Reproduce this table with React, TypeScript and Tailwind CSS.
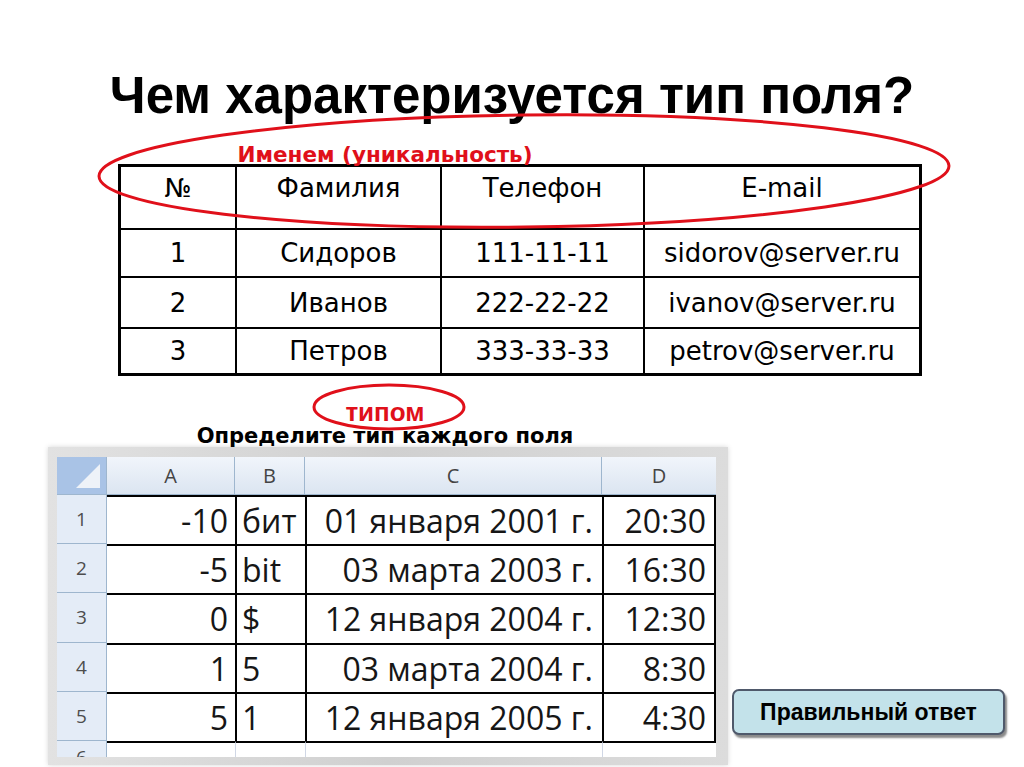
export default function App() {
  const people = [
    { n: "1", name: "Сидоров", phone: "111-11-11", mail: "sidorov@server.ru", h: "h-[48px]" },
    { n: "2", name: "Иванов", phone: "222-22-22", mail: "ivanov@server.ru", h: "h-[51px]" },
    { n: "3", name: "Петров", phone: "333-33-33", mail: "petrov@server.ru", h: "h-[46px]" },
  ];

  const sheet = [
    { a: "-10", b: "бит", c: "01 января 2001 г.", d: "20:30", h: "h-[49px]" },
    { a: "-5", b: "bit", c: "03 марта 2003 г.", d: "16:30", h: "h-[49px]" },
    { a: "0", b: "$", c: "12 января 2004 г.", d: "12:30", h: "h-[50px]" },
    { a: "1", b: "5", c: "03 марта 2004 г.", d: "8:30", h: "h-[49px]" },
    { a: "5", b: "1", c: "12 января 2005 г.", d: "4:30", h: "h-[49px]" },
  ];

  return (
    <div className="relative h-[767px] w-[1024px] overflow-hidden bg-white font-['Liberation_Sans',sans-serif] text-black">
      <h1 className="pt-[72px] text-center text-[51px] font-bold leading-[48px]">
        Чем характеризуется тип поля?
      </h1>

      {/* table with the name highlighted */}
      <div className="relative mt-[26px]">
        <p className="w-[770px] text-center font-['DejaVu_Sans',sans-serif] text-[21.5px] font-bold leading-[18px] text-[#e0101a]">
          Именем (уникальность)
        </p>

        <div className="ml-[118px] w-[804px] border-[3px] border-black font-['DejaVu_Sans',sans-serif] text-[26px] leading-[30px]">
          <div className="flex h-[61px]">
            <div className="w-[114px] pt-[6px] text-center">№</div>
            <div className="w-[205px] border-l-2 border-black pt-[6px] text-center">Фамилия</div>
            <div className="w-[203px] border-l-2 border-black pt-[6px] text-center">Телефон</div>
            <div className="w-[276px] border-l-2 border-black pt-[6px] text-center">E-mail</div>
          </div>
          {people.map((p) => (
            <div key={p.n} className={`flex border-t-2 border-black ${p.h}`}>
              <div className="flex w-[114px] items-center justify-center">{p.n}</div>
              <div className="flex w-[205px] items-center justify-center border-l-2 border-black">{p.name}</div>
              <div className="flex w-[203px] items-center justify-center border-l-2 border-black">{p.phone}</div>
              <div className="flex w-[276px] items-center justify-center border-l-2 border-black">{p.mail}</div>
            </div>
          ))}
        </div>

        <svg className="pointer-events-none absolute left-[90px] top-[-40px]" width="870" height="130">
          <ellipse cx="434" cy="65" rx="425" ry="56" fill="none" stroke="#e0101a" strokeWidth="3" transform="rotate(-0.7 434 65)" />
        </svg>
      </div>

      <div className="relative h-[71px]">
        <p className="w-[770px] pt-[24px] text-center text-[26px] font-bold leading-[25px] text-[#e0101a]">типом</p>
        <p className="w-[770px] text-center font-['DejaVu_Sans',sans-serif] text-[21px] font-bold leading-[22px]">
          Определите тип каждого поля
        </p>
        <svg className="pointer-events-none absolute left-[310px] top-[6px]" width="160" height="52">
          <ellipse cx="79" cy="25" rx="75" ry="22" fill="none" stroke="#e0101a" strokeWidth="3" />
        </svg>
      </div>

      <div className="flex items-end">
        {/* spreadsheet snapshot */}
        <div className="ml-[48px] h-[318px] w-[680px] bg-gradient-to-r from-[#e2e2e2] via-[#d0d0d0] to-[#dcdcdc] pb-[8px] pl-[9px] pr-[12px] pt-[10px] shadow-[0_0_5px_#d8d8d8]">
          <div className="h-full w-[659px] overflow-hidden bg-white font-['Open_Sans',sans-serif]">
            <div className="flex h-[38px] border-b border-[#9eb6ce] bg-gradient-to-b from-[#f1f5fb] to-[#dbe5f1] text-[20px] text-[#444]">
              <div className="relative w-[50px] border-r border-[#9eb6ce] bg-[#a9c3e6]">
                <div className="absolute bottom-[6px] right-[6px] h-0 w-0 border-b-[24px] border-l-[24px] border-b-[#eef2f8] border-l-transparent" />
              </div>
              <div className="flex w-[128px] items-center justify-center border-r border-[#9eb6ce]">A</div>
              <div className="flex w-[70px] items-center justify-center border-r border-[#9eb6ce]">B</div>
              <div className="flex w-[297px] items-center justify-center border-r border-[#9eb6ce]">C</div>
              <div className="flex w-[114px] items-center justify-center">D</div>
            </div>

            {sheet.map((r, i) => (
              <div key={i} className={`flex ${r.h} text-[32px] text-[#161616]`}>
                <div className="flex w-[50px] items-center justify-center border-b border-r border-[#9eb6ce] bg-[#e4ecf7] text-[19px] text-[#4d4d4d]">
                  {i + 1}
                </div>
                <div className="flex w-[128px] items-center justify-end border-t-2 border-black pr-[7px]">{r.a}</div>
                <div className="flex w-[70px] items-center border-l-2 border-t-2 border-black pl-[5px]">{r.b}</div>
                <div className="flex w-[297px] items-center justify-end border-l-2 border-t-2 border-black pr-[9px]">{r.c}</div>
                <div className="flex w-[114px] items-center justify-end border-l-2 border-r-2 border-t-2 border-black pr-[8px]">{r.d}</div>
              </div>
            ))}

            <div className="flex h-[30px]">
              <div className="w-[50px] border-r border-[#9eb6ce] bg-[#e4ecf7] pt-[4px] text-center text-[19px] leading-[24px] text-[#4d4d4d]">
                6
              </div>
              <div className="w-[128px] border-t-2 border-black" />
              <div className="w-[70px] border-l border-t-2 border-[#d0d7e5] border-t-black" />
              <div className="w-[297px] border-l border-t-2 border-[#d0d7e5] border-t-black" />
              <div className="w-[114px] border-l border-t-2 border-[#d0d7e5] border-t-black" />
            </div>
          </div>
        </div>

        <button className="mb-[30px] ml-[4px] flex h-[46px] w-[273px] items-center justify-center rounded-[7px] border-2 border-[#4f596b] bg-[#c3e2ea] text-[23px] font-bold shadow-[2px_3px_2px_#8a8a8a]">
          Правильный ответ
        </button>
      </div>
    </div>
  );
}
